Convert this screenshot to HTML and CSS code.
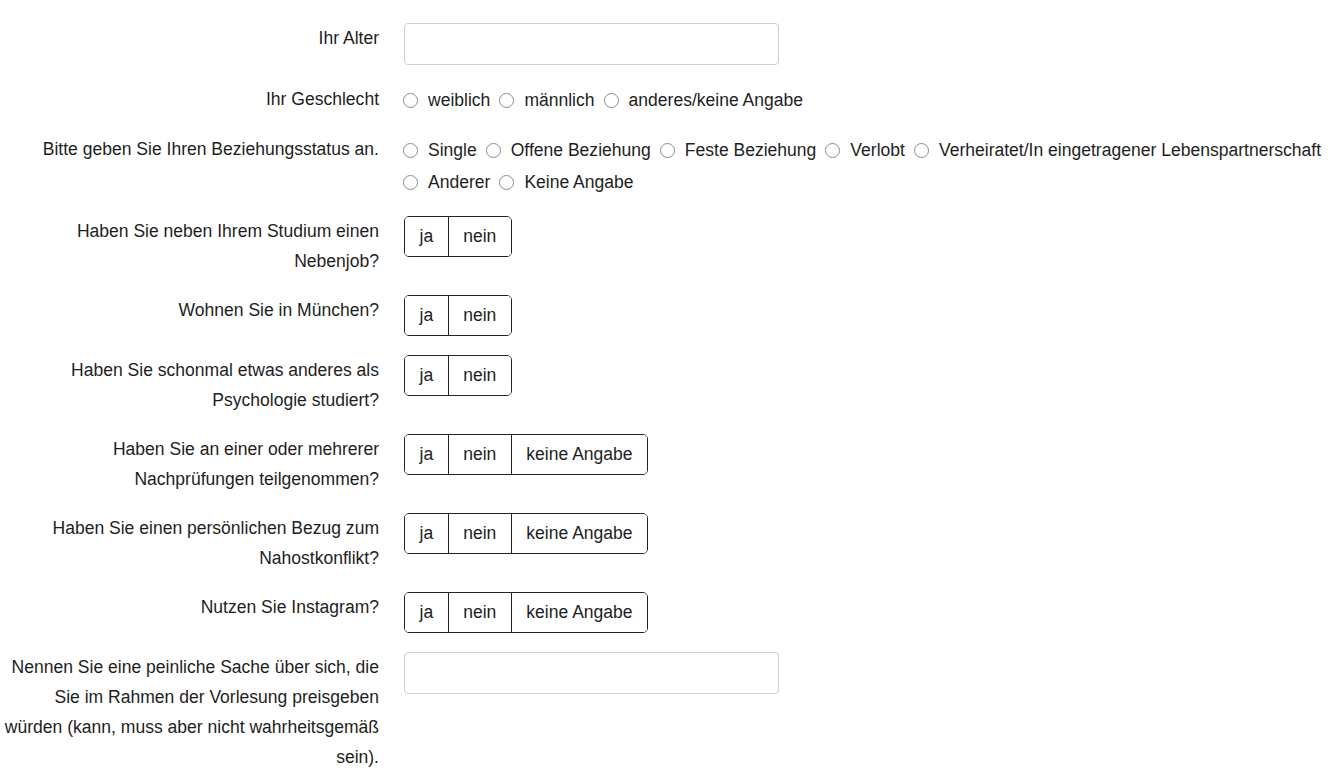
FILE: index.html
```html
<!DOCTYPE html>
<html lang="de">
<head>
<meta charset="utf-8">
<title>Fragebogen</title>
<link rel="stylesheet" href="styles.css">
</head>
<body>
<form class="form">
  <div class="row">
    <label class="label">Ihr Alter</label>
    <div class="control"><input class="text-input" type="text"></div>
  </div>
  <div class="row">
    <label class="label">Ihr Geschlecht</label>
    <div class="control radios">
      <label class="opt"><input type="radio" name="g"><span>weiblich</span></label>
      <label class="opt"><input type="radio" name="g"><span>männlich</span></label>
      <label class="opt"><input type="radio" name="g"><span>anderes/keine Angabe</span></label>
    </div>
  </div>
  <div class="row">
    <label class="label">Bitte geben Sie Ihren Beziehungsstatus an.</label>
    <div class="control radios">
      <label class="opt"><input type="radio" name="b"><span>Single</span></label>
      <label class="opt"><input type="radio" name="b"><span>Offene Beziehung</span></label>
      <label class="opt"><input type="radio" name="b"><span>Feste Beziehung</span></label>
      <label class="opt"><input type="radio" name="b"><span>Verlobt</span></label>
      <label class="opt"><input type="radio" name="b"><span>Verheiratet/In eingetragener Lebenspartnerschaft</span></label>
      <label class="opt"><input type="radio" name="b"><span>Anderer</span></label>
      <label class="opt"><input type="radio" name="b"><span>Keine Angabe</span></label>
    </div>
  </div>
  <div class="row">
    <label class="label">Haben Sie neben Ihrem Studium einen Nebenjob?</label>
    <div class="control"><div class="btn-group"><button type="button">ja</button><button type="button">nein</button></div></div>
  </div>
  <div class="row">
    <label class="label">Wohnen Sie in München?</label>
    <div class="control"><div class="btn-group"><button type="button">ja</button><button type="button">nein</button></div></div>
  </div>
  <div class="row">
    <label class="label">Haben Sie schonmal etwas anderes als Psychologie studiert?</label>
    <div class="control"><div class="btn-group"><button type="button">ja</button><button type="button">nein</button></div></div>
  </div>
  <div class="row">
    <label class="label">Haben Sie an einer oder mehrerer Nachprüfungen teilgenommen?</label>
    <div class="control"><div class="btn-group"><button type="button">ja</button><button type="button">nein</button><button type="button">keine Angabe</button></div></div>
  </div>
  <div class="row">
    <label class="label">Haben Sie einen persönlichen Bezug zum Nahostkonflikt?</label>
    <div class="control"><div class="btn-group"><button type="button">ja</button><button type="button">nein</button><button type="button">keine Angabe</button></div></div>
  </div>
  <div class="row">
    <label class="label">Nutzen Sie Instagram?</label>
    <div class="control"><div class="btn-group"><button type="button">ja</button><button type="button">nein</button><button type="button">keine Angabe</button></div></div>
  </div>
  <div class="row">
    <label class="label">Nennen Sie eine peinliche Sache über sich, die Sie im Rahmen der Vorlesung preisgeben würden (kann, muss aber nicht wahrheitsgemäß sein).</label>
    <div class="control"><input class="text-input" type="text"></div>
  </div>
</form>
</body>
</html>
```
FILE: styles.css
```css
html, body {
  margin: 0;
  padding: 0;
  background: #ffffff;
}
body {
  font-family: "Liberation Sans", Arial, sans-serif;
  font-size: 17.55px;
  color: #1e1e1e;
}
.form {
  display: flex;
  flex-direction: column;
  gap: 19px;
  padding: 23px 0 0 1px;
}
.row {
  display: flex;
  align-items: flex-start;
  gap: 25px;
}
.label {
  flex: 0 0 378px;
  width: 378px;
  text-align: right;
  line-height: 30px;
}
.control {
  flex: 1;
  min-width: 0;
}
.text-input {
  display: block;
  box-sizing: border-box;
  width: 375px;
  height: 42px;
  margin: 0;
  border: 1px solid #cfcfcf;
  border-radius: 4px;
  background: #fff;
  font: inherit;
  padding: 0 10px;
}
.radios {
  display: flex;
  flex-wrap: wrap;
  line-height: 32px;
  margin-bottom: -1px;
}
.opt {
  display: inline-flex;
  align-items: center;
  margin-right: 10px;
}
.opt input {
  appearance: none;
  -webkit-appearance: none;
  box-sizing: border-box;
  width: 15px;
  height: 15px;
  margin: 0 10px 0 -1px;
  border: 1px solid #8c8c8c;
  border-radius: 50%;
  background: #fff;
}
.btn-group {
  display: inline-flex;
  height: 41px;
  box-sizing: border-box;
  border: 1px solid #222;
  border-radius: 5px;
  overflow: hidden;
}
.btn-group button {
  font: inherit;
  color: #1e1e1e;
  background: #fff;
  border: 0;
  border-left: 1px solid #222;
  padding: 0 14.5px;
  margin: 0;
  height: 100%;
}
.btn-group button:first-child {
  border-left: 0;
}
```
